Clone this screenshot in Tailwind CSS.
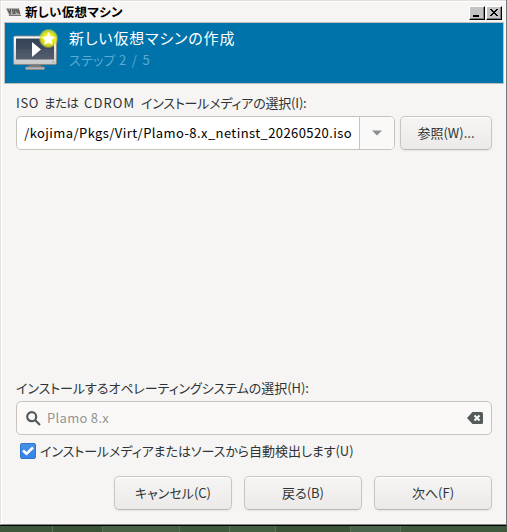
<!DOCTYPE html>
<html lang="ja">
<head>
<meta charset="utf-8">
<title>新しい仮想マシン</title>
<script src="https://cdn.jsdelivr.net/npm/@tailwindcss/browser@4"></script>
</head>
<body class="w-[507px] h-[532px] overflow-hidden bg-[#3d573d] font-['Noto_Sans_CJK_JP',sans-serif] text-[13px] text-[#2e3436] whitespace-nowrap">
<div class="flex h-[526px] flex-col border-b border-r border-b-black border-r-[#777] bg-[#f6f5f4]">
<div class="flex h-[525px] flex-col border-b border-l border-t border-b-[#888] border-l-[#e4e2e0] border-t-[#dedddb]">
<div class="flex grow flex-col border-l border-t border-white px-[2px]">

<header class="flex h-5 shrink-0 items-center pl-[2px]">
  <svg class="h-4 w-4 shrink-0" viewBox="0 0 16 16">
    <path d="M0 4h13l2 8H3z" fill="#b5b3b1"/><path d="M1.500 5l2.500 4.500L4.500 5M6.500 5l1 5M9 10L8.500 6h2l1 3M12 5l1.500 5" fill="none" stroke="#555" stroke-width="1.300"/><path d="M3 11.500h12" stroke="#777"/>
  </svg>
  <h1 class="ml-[3px] text-[12.5px] leading-5 font-bold text-black tracking-[0.3px] [font-feature-settings:'palt']">新しい仮想マシン</h1>
  <div class="ml-auto mt-[1px] mr-[2px] flex gap-[1px]">
    <button class="h-[14px] w-4 border-b border-r border-l border-t border-b-black border-r-black border-t-white border-l-white bg-[#c3c3c3] shadow-[inset_-1px_-1px_#808080]"><svg class="block h-3 w-[14px]" viewBox="0 0 14 12"><path d="M3 8h6v2H3z"/></svg></button>
    <button class="h-[14px] w-4 border-b border-r border-l border-t border-b-black border-r-black border-t-white border-l-white bg-[#c3c3c3] shadow-[inset_-1px_-1px_#808080]"><svg class="block h-3 w-[14px]" viewBox="0 0 14 12" shape-rendering="crispEdges"><path d="M3 2h2v1h1v1h2V3h1V2h2v1h-1v1H9v1H8v1h1v1h1v1h1v1H9V8H8V7H6v1H5v1H3V8h1V7h1V6h1V5H5V4H4V3H3z"/></svg></button>
  </div>
</header>

<section class="flex h-[62px] shrink-0 border border-[#c0bfbc] bg-[#0073ab]">
  <svg class="ml-[7px] mt-[6px] h-[44px] w-[48px] shrink-0" viewBox="0 0 48 44">
    <defs>
      <linearGradient id="screen" x2="0" y2="1"><stop stop-color="#354154"/><stop offset=".5" stop-color="#3e4a5d"/><stop offset=".52" stop-color="#495263"/><stop offset="1" stop-color="#555e6d"/></linearGradient>
      <linearGradient id="frame" x2="0" y2="1"><stop stop-color="#fff"/><stop offset="1" stop-color="#c9c9c9"/></linearGradient>
      <radialGradient id="glow"><stop offset=".5" stop-color="#efee20"/><stop offset=".8" stop-color="#dfe225" stop-opacity=".8"/><stop offset="1" stop-color="#d5df20" stop-opacity="0"/></radialGradient>
    </defs>
    <path d="M17 36h12v4H17z" fill="#777"/>
    <rect x="13.500" y="38" width="19" height="2.500" rx="1" fill="#b9b9b9" stroke="#888"/>
    <rect x="1.500" y="7" width="43" height="28.500" rx="1.500" fill="url(#frame)" stroke="#888"/>
    <rect x="4" y="9.500" width="38" height="21" fill="url(#screen)"/>
    <path d="M20 13v15l9-7.500z" fill="#fff"/>
    <path d="M40 33h2" stroke="#6c6"/>
    <circle cx="36.500" cy="9.500" r="10" fill="url(#glow)"/>
    <path d="M36.500 3l2 4.300 4.700.600-3.500 3.200.900 4.800-4.100-2.400-4.200 2.400.900-4.800-3.400-3.200 4.700-.600z" fill="#fff"/>
  </svg>
  <div class="ml-[9px] pt-[4px]">
    <h2 class="text-[15px] leading-[22px] text-white tracking-[0.85px] [font-feature-settings:'palt']">新しい仮想マシンの作成</h2>
    <p class="text-[13px] leading-[22px] text-[#5aaad3] tracking-[0.3px] [font-feature-settings:'palt']">ステップ <span class="tracking-[1.3px]">2 / 5</span></p>
  </div>
</section>

<main class="flex grow flex-col pr-[11px] pl-3">
  <p class="mt-[9px] flex h-5 text-[13px] leading-5 [font-feature-settings:'palt']"><span class="w-7 tracking-[0.6px]">ISO </span><span class="w-[40px] text-[12.5px] tracking-[-0.5px]">または </span><span class="w-[57px] tracking-[1.1px]">CDROM </span><span class="tracking-[-0.2px]">インストールメディアの選択(I):</span></p>
  <div class="mt-[3px] flex h-[34px] gap-[5px]">
    <div class="flex w-[379px] rounded-[5px] border border-[#c8c3bd] bg-white">
      <div class="flex w-[342px] items-center justify-end overflow-hidden pr-[7px] text-[13px] text-black"><span class="tracking-[0.41px]">/kojima/Pkgs/Virt/Plamo-8.x_netinst_20260520.iso</span></div>
      <div class="flex grow items-center justify-center rounded-r-[4px] border-l border-[#c8c3bd] bg-[#faf9f8]"><svg class="h-[6px] w-[10px]" viewBox="0 0 10 6"><path d="M0 .5h10L5 5.500z" fill="#8b8e8f"/></svg></div>
    </div>
    <button class="w-[92px] rounded-[5px] border border-[#c9c5c0] border-b-[#bbb7b2] bg-linear-to-b from-[#f6f5f4] to-[#eceae8] pb-[1px] text-[13px] shadow-[0_1px_2px_#00000012,inset_0_1px_#fff] tracking-[0px]">参照(W)...</button>
  </div>

  <p class="mt-[228px] h-5 text-[13px] leading-5 tracking-[-0.06px] [font-feature-settings:'palt']">インストールするオペレーティングシステムの選択(H):</p>
  <div class="mt-[3px] flex h-[34px] w-[476px] items-center rounded-[5px] border border-[#c8c3bd] bg-[#faf9f8] pr-2 pl-[9px]">
    <svg class="h-[15px] w-[15px]" viewBox="0 0 15 15" fill="none" stroke="#555a5b" stroke-width="2.200"><circle cx="5.700" cy="5.700" r="4.500"/><path d="M9 9l5 5"/></svg>
    <span class="ml-[6px] text-[13px] text-[#929595] tracking-[0.3px]">Plamo 8.x</span>
    <svg class="ml-auto h-3 w-4" viewBox="0 0 16 12"><path d="M5.500 0H14.500Q16 0 16 1.500V10.500Q16 12 14.500 12H5.500L0 6z" fill="#555a5b"/><path d="M7.500 3.500l5 5M12.500 3.500l-5 5" stroke="#fff" stroke-width="2"/></svg>
  </div>
  <label class="mt-2 flex h-4 items-center pl-1">
    <span class="flex h-4 w-4 items-center justify-center rounded-[2px] border border-[#2c76cf] bg-linear-to-b from-[#4590e8] to-[#3584e4]"><svg class="h-[10px] w-[12px]" viewBox="0 0 12 10" fill="none" stroke="#fff" stroke-width="2.600"><path d="M1 4.500l3.500 3.300L11 1.500"/></svg></span>
    <span class="ml-1 leading-4 tracking-[-0.05px] [font-feature-settings:'palt']">インストールメディアまたはソースから自動検出します(U)</span>
  </label>
  <div class="mt-[17px] flex h-[34px] w-[476px] justify-end gap-3">
    <button class="w-[118px] rounded-[5px] border border-[#c9c5c0] border-b-[#bbb7b2] bg-linear-to-b from-[#f6f5f4] to-[#eceae8] pb-[1px] shadow-[0_1px_2px_#00000012,inset_0_1px_#fff] [font-feature-settings:'palt']">キャンセル(C)</button>
    <button class="w-[118px] rounded-[5px] border border-[#c9c5c0] border-b-[#bbb7b2] bg-linear-to-b from-[#f6f5f4] to-[#eceae8] pb-[1px] shadow-[0_1px_2px_#00000012,inset_0_1px_#fff] [font-feature-settings:'palt']">戻る(B)</button>
    <button class="w-[118px] rounded-[5px] border border-[#c9c5c0] border-b-[#bbb7b2] bg-linear-to-b from-[#f6f5f4] to-[#eceae8] pb-[1px] shadow-[0_1px_2px_#00000012,inset_0_1px_#fff] [font-feature-settings:'palt']">次へ(F)</button>
  </div>
</main>
</div></div></div>
<div class="grid h-[6px] grid-cols-[53px_50px_77px_50px_46px_75px_50px_106px] divide-x divide-[#557555]">
  <i class="bg-[#3c573c]"></i><i class="bg-[#3a5339]"></i><i class="bg-[#456045]"></i><i class="bg-[#3e5a3d]"></i><i class="bg-[#435f42]"></i><i class="bg-[#3a5339]"></i><i class="bg-[#48644a]"></i><i class="bg-[#3f5a3f]"></i>
</div>
</body>
</html>
